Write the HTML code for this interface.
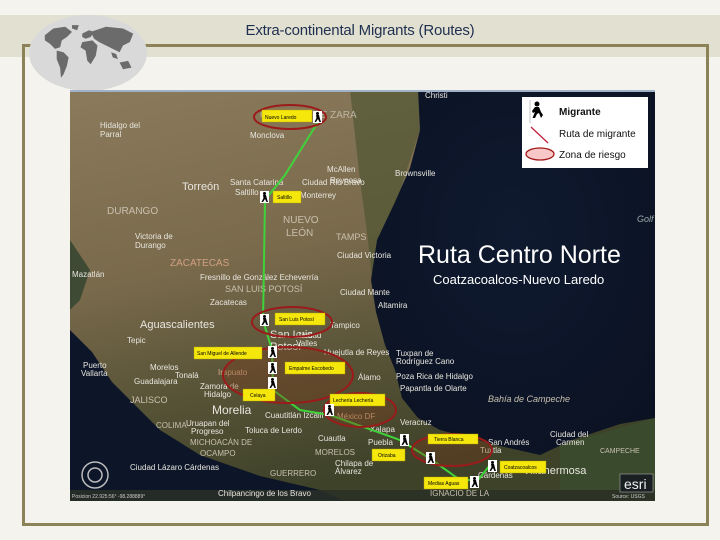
<!DOCTYPE html>
<html><head><meta charset="utf-8"><style>
html,body{margin:0;padding:0}
body{width:720px;height:540px;background:#f4f3ee;position:relative;overflow:hidden;font-family:"Liberation Sans",sans-serif}
.band{position:absolute;left:0;top:15px;width:720px;height:42px;background:#e2e0d1}
.title{position:absolute;left:0;width:720px;top:22px;text-align:center;font-size:15px;color:#1f3050;letter-spacing:-0.2px}
.frame{position:absolute;left:22px;top:44px;width:681px;height:476px;border:3px solid #8c8257}
</style></head><body>
<div class="band"></div>
<div class="frame"></div>
<div class="title">Extra-continental Migrants (Routes)</div>
<svg style="position:absolute;left:28px;top:14px" width="120" height="78" viewBox="0 0 120 78">
<ellipse cx="60" cy="39" rx="59" ry="38" fill="#d9d9d9"/>
<g fill="#6b6b6b" transform="translate(10,6) scale(0.85)">
<path d="M8 18 L18 10 L32 8 L40 14 L34 20 L28 24 L26 32 L20 34 L14 28 L8 24Z"/>
<path d="M22 36 L30 38 L36 44 L34 54 L30 64 L27 68 L26 56 L22 46Z"/>
<path d="M40 6 L48 6 L46 12 L40 10Z"/>
<path d="M52 16 L60 12 L66 14 L62 20 L56 22 L52 20Z"/>
<path d="M52 26 L64 24 L70 30 L68 42 L62 52 L58 48 L56 36 L50 32Z"/>
<path d="M62 14 L80 8 L100 10 L112 16 L108 26 L100 30 L96 38 L88 34 L80 30 L72 26 L66 22Z"/>
<path d="M96 50 L106 48 L110 56 L100 58Z"/>
<path d="M86 38 L92 40 L94 46 L88 44Z"/>
</g></svg>

<svg style="position:absolute;left:70px;top:90px" width="585" height="411" viewBox="70 90 585 411" font-family="Liberation Sans, sans-serif">
<defs>
<linearGradient id="land" x1="0" y1="0" x2="0.3" y2="1">
<stop offset="0" stop-color="#8b7b5c"/><stop offset="0.45" stop-color="#7a6a4c"/><stop offset="0.75" stop-color="#565236"/><stop offset="1" stop-color="#3d4229"/>
</linearGradient>
<radialGradient id="sea" cx="0.5" cy="0.4" r="0.7"><stop offset="0" stop-color="#0f1a30"/><stop offset="1" stop-color="#0b1222"/></radialGradient>
</defs>
<rect x="70" y="90" width="585" height="411" fill="url(#land)"/>
<path d="M350 90 L418 90 L420 130 L405 175 L395 210 L380 240 L372 280 L368 240 L360 180 Z" fill="#48522f" opacity="0.6"/>
<path d="M418 90 L655 90 L655 418 L620 424 L572 440 L540 455 L500 446 L470 438 L440 430 L418 418 L402 398 L395 370 L385 345 L376 312 L371 280 L377 240 L395 202 L410 168 L420 130 Z" fill="url(#sea)"/>
<path d="M560 445 L655 418 L655 500 L560 500Z" fill="#3a4a2c"/>
<path d="M70 330 L92 352 L112 382 L160 430 L200 455 L260 476 L320 490 L345 501 L70 501Z" fill="#0d1628"/>
<path d="M70 240 L90 270 L80 300 L70 310Z" fill="#3e4a34"/>
<rect x="70" y="90" width="585" height="2" fill="#9fb2c8"/>
<rect x="70" y="490" width="585" height="11" fill="#2a2f26" opacity="0.85"/>
<text x="72" y="498" font-size="5" fill="#ccc">Posicion 22.925:56°  -98.288889°</text>
<text x="612" y="498" font-size="5" fill="#ccc">Source: USGS</text>
<rect x="620" y="474" width="33" height="18" fill="#1a1f22" stroke="#aaa" stroke-width="0.6"/>
<text x="624" y="489" font-size="14" fill="#eee">esri</text>
<circle cx="95" cy="475" r="13" fill="none" stroke="#bbb" stroke-width="1.5"/>
<circle cx="95" cy="475" r="7" fill="none" stroke="#bbb" stroke-width="1.5"/>
<g fill="#e8e6df" font-size="8">
<text x="260" y="118" font-size="10" fill="#bdb5a2">COAHUILA DE ZARA</text>
<text x="100" y="128">Hidalgo del</text><text x="100" y="137">Parral</text>
<text x="250" y="138">Monclova</text>
<text x="425" y="98">Christi</text>
<text x="327" y="172">McAllen</text><text x="395" y="176">Brownsville</text>
<text x="330" y="183">Reynosa</text>
<text x="182" y="190" font-size="11">Torreón</text>
<text x="230" y="185">Santa Catarina</text><text x="235" y="195">Saltillo</text>
<text x="302" y="185">Ciudad Rio Bravo</text><text x="300" y="198">Monterrey</text>
<text x="107" y="214" font-size="10" fill="#c8c0ae">DURANGO</text>
<text x="283" y="223" font-size="10" fill="#c8c0ae">NUEVO</text><text x="286" y="236" font-size="10" fill="#c8c0ae">LEÓN</text>
<text x="336" y="240" font-size="9" fill="#c8c0ae">TAMPS</text>
<text x="135" y="239">Victoria de</text><text x="135" y="248">Durango</text>
<text x="337" y="258">Ciudad Victoria</text>
<text x="170" y="266" font-size="10" fill="#d0a080">ZACATECAS</text>
<text x="72" y="277">Mazatlán</text>
<text x="200" y="280">Fresnillo de González Echeverría</text>
<text x="225" y="292" font-size="9" fill="#c8c0ae">SAN LUIS POTOSÍ</text>
<text x="340" y="295">Ciudad Mante</text>
<text x="210" y="305">Zacatecas</text>
<text x="378" y="308">Altamira</text>
<text x="140" y="328" font-size="11">Aguascalientes</text>
<text x="330" y="328">Tampico</text>
<text x="127" y="343">Tepic</text>
<text x="296" y="338">Ciudad</text><text x="296" y="346">Valles</text>
<text x="270" y="338" font-size="11">San Luis</text><text x="270" y="350" font-size="11">Potosí</text>
<text x="396" y="356">Tuxpan de</text><text x="396" y="364">Rodríguez Cano</text>
<text x="324" y="355">Huejutla de Reyes</text>
<text x="83" y="368">Puerto</text><text x="81" y="376">Vallarta</text>
<text x="150" y="370">Morelos</text>
<text x="218" y="375" fill="#d9b08a">Irapuato</text>
<text x="134" y="384">Guadalajara</text><text x="175" y="378">Tonalá</text>
<text x="200" y="389">Zamora de</text><text x="204" y="397">Hidalgo</text>
<text x="358" y="380">Álamo</text><text x="396" y="379">Poza Rica de Hidalgo</text>
<text x="400" y="391">Papantla de Olarte</text>
<text x="130" y="403" font-size="9" fill="#c8c0ae">JALISCO</text>
<text x="488" y="402" font-size="9" fill="#c8c0ae" font-style="italic">Bahía de Campeche</text>
<text x="212" y="414" font-size="12">Morelia</text>
<text x="265" y="418">Cuautitlán Izcalli</text>
<text x="337" y="419" fill="#d9b08a">México DF</text>
<text x="156" y="428" fill="#c8c0ae">COLIMA</text>
<text x="186" y="426">Uruapan del</text><text x="191" y="434">Progreso</text>
<text x="245" y="433">Toluca de Lerdo</text>
<text x="400" y="425">Veracruz</text><text x="370" y="432">Xalapa</text>
<text x="318" y="441">Cuautla</text><text x="368" y="445">Puebla</text>
<text x="550" y="437">Ciudad del</text><text x="556" y="445">Carmen</text>
<text x="488" y="445">San Andrés</text><text x="480" y="453">Tuxtla</text>
<text x="190" y="445" fill="#c8c0ae">MICHOACÁN DE</text><text x="200" y="456" fill="#c8c0ae">OCAMPO</text>
<text x="315" y="455" fill="#c8c0ae">MORELOS</text>
<text x="600" y="453" fill="#c8c0ae" font-size="7">CAMPECHE</text>
<text x="130" y="470">Ciudad Lázaro Cárdenas</text>
<text x="335" y="466">Chilapa de</text><text x="335" y="474">Álvarez</text>
<text x="523" y="474" font-size="11">Villahermosa</text>
<text x="478" y="478">Cárdenas</text>
<text x="270" y="476" fill="#c8c0ae">GUERRERO</text>
<text x="218" y="496">Chilpancingo de los Bravo</text>
<text x="430" y="496" fill="#c8c0ae">IGNACIO DE LA</text>
</g>
<polyline points="318,122 285,175 265,200 263,320 272,350 273,390 300,410 330,415 400,440 432,460 460,480 478,480 490,465" fill="none" stroke="#3fd23a" stroke-width="2"/>
<g fill="none" stroke="#9b1b1b" stroke-width="2">
<ellipse cx="290" cy="117" rx="36" ry="12"/>
<ellipse cx="292" cy="322" rx="40" ry="15"/>
<ellipse cx="288" cy="375" rx="65" ry="28" fill="#7a3a1a" fill-opacity="0.35"/>
<ellipse cx="360" cy="410" rx="36" ry="17" fill="#7a3a1a" fill-opacity="0.35"/>
<ellipse cx="452" cy="450" rx="40" ry="16" fill="#7a3a1a" fill-opacity="0.35"/>
</g>
<g fill="#f5e60c" stroke="#b0a000" stroke-width="0.4">
<rect x="262" y="110" width="50" height="12"/><rect x="273" y="191" width="28" height="12"/>
<rect x="275" y="313" width="50" height="12"/><rect x="194" y="347" width="68" height="12"/>
<rect x="285" y="362" width="60" height="12"/><rect x="243" y="389" width="32" height="12"/>
<rect x="330" y="394" width="55" height="12"/><rect x="428" y="434" width="50" height="10"/>
<rect x="372" y="449" width="33" height="12"/><rect x="500" y="461" width="46" height="12"/>
<rect x="424" y="477" width="44" height="12"/>
</g>
<g font-size="5" fill="#000">
<text x="265" y="119">Nuevo Laredo</text><text x="277" y="199">Saltillo</text>
<text x="279" y="321">San Luis Potosí</text><text x="197" y="355">San Miguel de Allende</text>
<text x="289" y="370">Empalme Escobedo</text><text x="250" y="397">Celaya</text>
<text x="333" y="402">Lechería Lechería</text><text x="434" y="441">Tierra Blanca</text>
<text x="378" y="457">Orizaba</text><text x="504" y="469">Coatzacoalcos</text>
<text x="428" y="485">Medias Aguas</text>
</g>
<g>
<g transform="translate(313,111)"><rect width="9" height="12" fill="#fff"/><circle cx="4.5" cy="2.5" r="1.5" fill="#000"/><path d="M3 4 L6 4 L7 8 L8 11 L6.5 11 L5 8 L3 11 L1.5 11 L3.5 7Z" fill="#000"/></g>
<g transform="translate(260,191)"><rect width="9" height="12" fill="#fff"/><circle cx="4.5" cy="2.5" r="1.5" fill="#000"/><path d="M3 4 L6 4 L7 8 L8 11 L6.5 11 L5 8 L3 11 L1.5 11 L3.5 7Z" fill="#000"/></g>
<g transform="translate(260,314)"><rect width="9" height="12" fill="#fff"/><circle cx="4.5" cy="2.5" r="1.5" fill="#000"/><path d="M3 4 L6 4 L7 8 L8 11 L6.5 11 L5 8 L3 11 L1.5 11 L3.5 7Z" fill="#000"/></g>
<g transform="translate(268,346)"><rect width="9" height="12" fill="#fff"/><circle cx="4.5" cy="2.5" r="1.5" fill="#000"/><path d="M3 4 L6 4 L7 8 L8 11 L6.5 11 L5 8 L3 11 L1.5 11 L3.5 7Z" fill="#000"/></g>
<g transform="translate(268,362)"><rect width="9" height="12" fill="#fff"/><circle cx="4.5" cy="2.5" r="1.5" fill="#000"/><path d="M3 4 L6 4 L7 8 L8 11 L6.5 11 L5 8 L3 11 L1.5 11 L3.5 7Z" fill="#000"/></g>
<g transform="translate(268,377)"><rect width="9" height="12" fill="#fff"/><circle cx="4.5" cy="2.5" r="1.5" fill="#000"/><path d="M3 4 L6 4 L7 8 L8 11 L6.5 11 L5 8 L3 11 L1.5 11 L3.5 7Z" fill="#000"/></g>
<g transform="translate(325,404)"><rect width="9" height="12" fill="#fff"/><circle cx="4.5" cy="2.5" r="1.5" fill="#000"/><path d="M3 4 L6 4 L7 8 L8 11 L6.5 11 L5 8 L3 11 L1.5 11 L3.5 7Z" fill="#000"/></g>
<g transform="translate(400,434)"><rect width="9" height="12" fill="#fff"/><circle cx="4.5" cy="2.5" r="1.5" fill="#000"/><path d="M3 4 L6 4 L7 8 L8 11 L6.5 11 L5 8 L3 11 L1.5 11 L3.5 7Z" fill="#000"/></g>
<g transform="translate(426,452)"><rect width="9" height="12" fill="#fff"/><circle cx="4.5" cy="2.5" r="1.5" fill="#000"/><path d="M3 4 L6 4 L7 8 L8 11 L6.5 11 L5 8 L3 11 L1.5 11 L3.5 7Z" fill="#000"/></g>
<g transform="translate(488,460)"><rect width="9" height="12" fill="#fff"/><circle cx="4.5" cy="2.5" r="1.5" fill="#000"/><path d="M3 4 L6 4 L7 8 L8 11 L6.5 11 L5 8 L3 11 L1.5 11 L3.5 7Z" fill="#000"/></g>
<g transform="translate(470,476)"><rect width="9" height="12" fill="#fff"/><circle cx="4.5" cy="2.5" r="1.5" fill="#000"/><path d="M3 4 L6 4 L7 8 L8 11 L6.5 11 L5 8 L3 11 L1.5 11 L3.5 7Z" fill="#000"/></g>
</g>
<rect x="522" y="97" width="126" height="71" fill="#fff"/>
<line x1="530" y1="100" x2="530" y2="123" stroke="#888" stroke-width="0.5"/>
<g transform="translate(531,101)"><circle cx="6" cy="3" r="2.5" fill="#000"/><path d="M4 6 L8 6 L10 11 L12 14 L10 17 L8 12 L6 13 L4 17 L1.5 17 L4 11 L2 12 L1 10Z" fill="#000"/></g>
<line x1="531" y1="127" x2="548" y2="143" stroke="#c0203a" stroke-width="1.3"/>
<ellipse cx="540" cy="154" rx="14" ry="6" fill="#f8c8c8" stroke="#a01818" stroke-width="1.3"/>
<g font-size="10" fill="#111"><text x="559" y="115" font-weight="bold">Migrante</text><text x="559" y="137">Ruta de migrante</text><text x="559" y="158">Zona de riesgo</text></g>
<text x="418" y="263" font-size="25" fill="#fff">Ruta Centro Norte</text>
<text x="433" y="284" font-size="13" fill="#fff">Coatzacoalcos-Nuevo Laredo</text>
<text x="637" y="222" font-size="9" fill="#9aa" font-style="italic">Golf</text>
</svg>
</body></html>
